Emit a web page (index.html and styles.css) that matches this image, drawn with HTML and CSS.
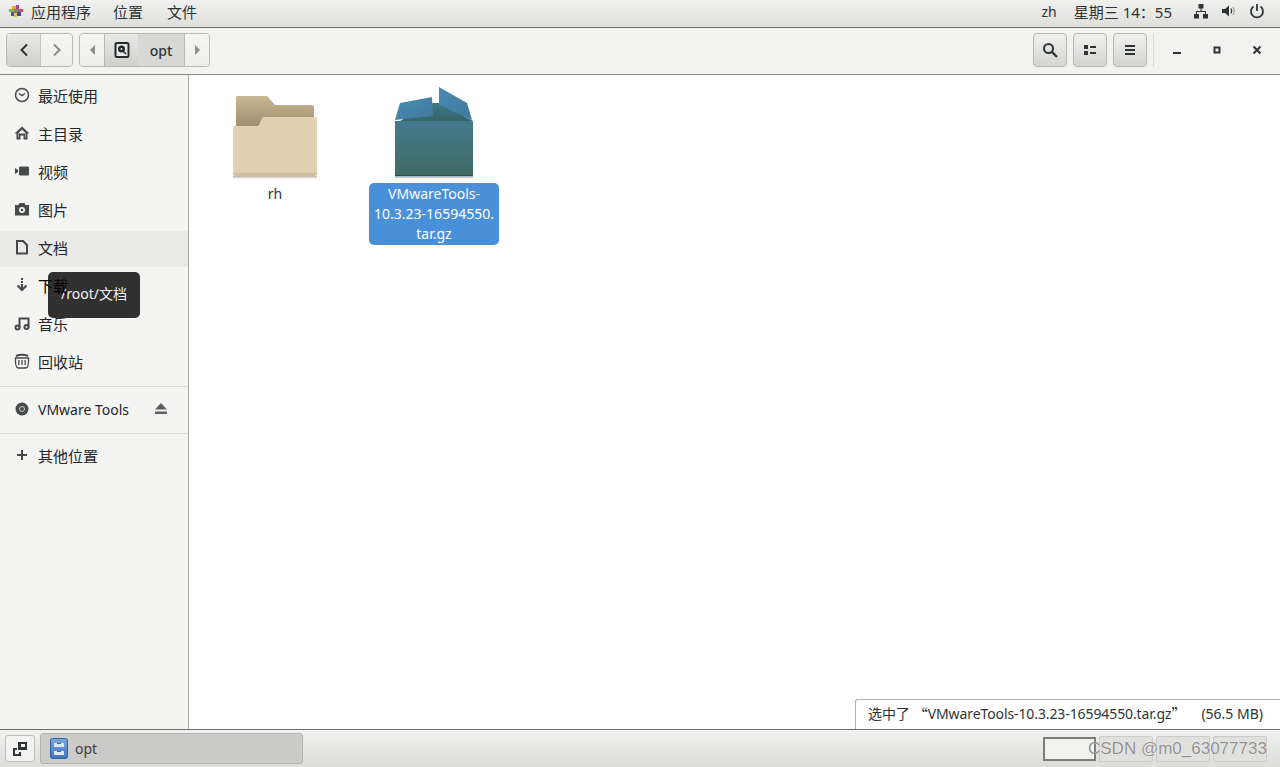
FILE: index.html
```html
<!DOCTYPE html>
<html lang="zh">
<head>
  <meta charset="UTF-8">
  <title>opt</title>
  <link rel="stylesheet" href="styles.css">
</head>
<body>
  <div class="topbar">
    <svg class="logo" width="18" height="18" viewBox="0 0 18 18">
      <rect x="5" y="4" width="4" height="3" fill="#e8a33c"/>
      <rect x="9" y="3" width="3" height="4" fill="#a04a9c"/>
      <rect x="12" y="7" width="4" height="3" fill="#c8447c"/>
      <rect x="2" y="7" width="5" height="3" fill="#7cb84a"/>
      <rect x="7" y="7" width="5" height="4" fill="#8f7f5a"/>
      <rect x="4" y="10" width="3" height="4" fill="#4a5aa8"/>
      <rect x="7" y="11" width="3" height="4" fill="#e0c850"/>
      <rect x="10" y="10" width="4" height="4" fill="#3f4c9c"/>
    </svg>
    <span class="menu-item first">应用程序</span>
    <span class="menu-item second">位置</span>
    <span class="menu-item">文件</span>
    <div class="spacer"></div>
    <span class="lang">zh</span>
    <span class="clock">星期三 14：55</span>
    <svg class="tray" width="16" height="16" viewBox="0 0 16 16" fill="#2e3436"><rect x="5.500" y="1" width="5" height="4.500"/><rect x="1" y="11" width="5" height="4.500"/><rect x="10" y="11" width="5" height="4.500"/><path d="M7.500 5h1v3h4.500v3h-1V9H4v2H3V8h4.500z"/></svg>
    <svg class="tray" width="16" height="16" viewBox="0 0 16 16"><path d="M1 6h3l4-3.500v11L4 10H1z" fill="#2e3436"/><path d="M10 5.500q1.500 2.500 0 5" stroke="#2e3436" stroke-width="1.300" fill="none"/><path d="M12 4q2.500 4 0 8" stroke="#9a9c9a" stroke-width="1.200" fill="none"/></svg>
    <svg class="tray last" width="16" height="16" viewBox="0 0 16 16" fill="none" stroke="#2e3436" stroke-width="1.800"><path d="M4.500 3.600a6 6 0 1 0 7 0"/><path d="M8 1v7"/></svg>
  </div>

  <div class="toolbar">
    <div class="btn-group">
      <div class="btn nav pressed"><svg width="10" height="14" viewBox="0 0 10 14" fill="none" stroke="#2e3436" stroke-width="2"><path d="M8 1.500 2.500 7 8 12.500"/></svg></div>
      <div class="btn nav"><svg width="10" height="14" viewBox="0 0 10 14" fill="none" stroke="#8a8d8a" stroke-width="2"><path d="M2 1.500 7.500 7 2 12.500"/></svg></div>
    </div>
    <div class="btn-group path">
      <div class="btn arrow"><svg width="7" height="10" viewBox="0 0 7 10"><path d="M6 0v10L1 5z" fill="#8a8d8a"/></svg></div>
      <div class="btn disk pressed"><svg width="16" height="16" viewBox="0 0 16 16"><rect x="1.500" y="1" width="13" height="14" rx="1.500" fill="#e8e8e6" stroke="#23282a" stroke-width="2"/><circle cx="7.500" cy="7" r="3.500" fill="#23282a"/><circle cx="7.500" cy="7" r="1" fill="#e8e8e6"/><path d="m9 9 3 3" stroke="#23282a" stroke-width="1.500"/></svg></div>
      <div class="btn crumb">opt</div>
      <div class="btn arrow"><svg width="7" height="10" viewBox="0 0 7 10"><path d="M1 0v10l5-5z" fill="#8a8d8a"/></svg></div>
    </div>
    <div class="spacer"></div>
    <div class="btn tool"><svg width="16" height="16" viewBox="0 0 16 16" fill="none" stroke="#2e3436" stroke-width="2"><circle cx="6.500" cy="6.500" r="4.500"/><path d="m10 10 5 5" stroke-width="2.400"/></svg></div>
    <div class="btn tool"><svg width="14" height="12" viewBox="0 0 14 12" fill="#2e3436"><rect x="1" y="1" width="4" height="4"/><rect x="1" y="7" width="4" height="4"/><rect x="7" y="2" width="6" height="2"/><rect x="7" y="8" width="6" height="2"/></svg></div>
    <div class="btn tool"><svg width="12" height="12" viewBox="0 0 12 12" fill="#2e3436"><rect x="1" y="1" width="10" height="2"/><rect x="1" y="5" width="10" height="2"/><rect x="1" y="9" width="10" height="2"/></svg></div>
    <div class="tool-sep"></div>
    <div class="win-btn"><svg width="10" height="10" viewBox="0 0 10 10"><rect x="1" y="7" width="8" height="2" fill="#2e3436"/></svg></div>
    <div class="win-btn"><svg width="10" height="10" viewBox="0 0 10 10"><rect x="2.500" y="2.500" width="5" height="5" fill="none" stroke="#2e3436" stroke-width="2"/></svg></div>
    <div class="win-btn"><svg width="10" height="10" viewBox="0 0 10 10" stroke="#2e3436" stroke-width="2"><path d="M1.500 1.500l7 7M8.500 1.500l-7 7"/></svg></div>
  </div>

  <div class="content">
    <div class="sidebar">
      <div class="row"><svg class="ico" width="16" height="16" viewBox="0 0 16 16" fill="none" stroke="#464a4a" stroke-width="1.500"><circle cx="8" cy="8" r="6.500"/><path d="m5 6.500 3 2 3-2"/></svg>最近使用</div>
      <div class="row"><svg class="ico" width="16" height="16" viewBox="0 0 16 16" fill="#464a4a"><path fill-rule="evenodd" d="M8 1.500 0.500 8.500h2V14.500h4v-4h3v4h4V8.500h2zM8 4.500l3.500 3.500v4.500h-.5v-4H5v4h-.5V8z"/></svg>主目录</div>
      <div class="row"><svg class="ico" width="16" height="16" viewBox="0 0 16 16" fill="#464a4a"><path d="M1 5l3 2v2l-3 2z"/><rect x="5" y="3.500" width="10" height="9" rx="1"/></svg>视频</div>
      <div class="row"><svg class="ico" width="16" height="16" viewBox="0 0 16 16"><path d="M1 4h3.500l1-2h5l1 2H15v10.500H1z" fill="#464a4a"/><circle cx="8" cy="9" r="3" fill="#f4f4f2"/><circle cx="8" cy="9" r="1.300" fill="#464a4a"/></svg>图片</div>
      <div class="row hover"><svg class="ico" width="16" height="16" viewBox="0 0 16 16" fill="none" stroke="#464a4a" stroke-width="2"><path d="M3 2h6l4 4v8.500H3z"/></svg>文档</div>
      <div class="row"><svg class="ico" width="16" height="16" viewBox="0 0 16 16"><g fill="#464a4a"><rect x="7" y="1" width="2" height="2"/><rect x="7" y="4" width="2" height="2"/><rect x="7" y="7" width="2" height="5"/></g><path d="m3.500 8.500 4.500 4.500 4.500-4.500" fill="none" stroke="#464a4a" stroke-width="2"/></svg><span class="over-tip">下载</span></div>
      <div class="row"><svg class="ico" width="16" height="16" viewBox="0 0 16 16" fill="none" stroke="#464a4a" stroke-width="2"><circle cx="3.500" cy="12.500" r="2"/><circle cx="12.500" cy="12" r="2"/><path d="M5.500 12.500V3.500h9v8.500"/></svg>音乐</div>
      <div class="row"><svg class="ico" width="16" height="16" viewBox="0 0 16 16" fill="none" stroke="#464a4a" stroke-width="1.300"><path d="M2 3q6-2.500 12 0" stroke-width="2"/><path d="M1.500 5q-.5 9 2.500 10h8q3-1 2.500-10z"/><path d="M5 7q-.5 3 0 5M8 7v5M11 7q.5 3 0 5"/></svg>回收站</div>
      <div class="side-sep"></div>
      <div class="row device"><svg class="ico" width="16" height="16" viewBox="0 0 16 16"><circle cx="8" cy="8" r="6.500" fill="#464a4a"/><circle cx="8" cy="8" r="2.500" fill="none" stroke="#c8c8c6" stroke-width="1"/></svg><span class="latin">VMware Tools</span><svg class="eject" width="14" height="12" viewBox="0 0 14 12" fill="#5d6062"><path d="M7 0l6 6.500H1z"/><rect x="1" y="8.500" width="12" height="2.500"/></svg></div>
      <div class="side-sep"></div>
      <div class="row"><svg class="ico" width="16" height="16" viewBox="0 0 16 16" fill="#464a4a"><rect x="7" y="3" width="2" height="10"/><rect x="3" y="7" width="10" height="2"/></svg>其他位置</div>
    </div>

    <div class="files">
      <div class="file">
        <div class="file-icon">
          <svg width="86" height="86" viewBox="0 0 86 86">
            <defs>
              <linearGradient id="tab" x1="0" y1="0" x2="0" y2="1"><stop offset="0" stop-color="#c9b692"/><stop offset="1" stop-color="#a08d6c"/></linearGradient>
              <linearGradient id="shade" x1="0" y1="0" x2="0" y2="1"><stop offset="0" stop-color="#b8b0a2"/><stop offset="1" stop-color="#fff"/></linearGradient>
            </defs>
            <path d="M4 3q0-2 2-2h28q1 0 2 1l7 8h36q3 0 3 2v20H4z" fill="url(#tab)"/>
            <rect x="1" y="81" width="84" height="3" fill="url(#shade)"/>
            <path d="M1 33q0-2 2-2h22q1 0 2-1l3-7q1-1 2-1h51q2 0 2 2v54q0 3-3 3H4q-3 0-3-3z" fill="#e3cfb2"/>
            <path d="M1 78q0 3 3 3h78q3 0 3-3v-.5H1z" fill="#d2bfa3"/>
          </svg>
        </div>
        <div class="file-name">rh</div>
      </div>
      <div class="file selected">
        <div class="file-icon box">
          <svg width="80" height="94" viewBox="0 0 80 94">
            <defs>
              <linearGradient id="body" x1="0" y1="0" x2="0" y2="1"><stop offset="0" stop-color="#457a8e"/><stop offset="1" stop-color="#3f6a63"/></linearGradient>
              <linearGradient id="flap" x1="0" y1="0" x2="1" y2="1"><stop offset="0" stop-color="#4a8ab5"/><stop offset="1" stop-color="#3f7a9c"/></linearGradient>
              <linearGradient id="inner" x1="0" y1="0" x2="0" y2="1"><stop offset="0" stop-color="#3e7884"/><stop offset="1" stop-color="#376468"/></linearGradient>
              <linearGradient id="floor" x1="0" y1="0" x2="0" y2="1"><stop offset="0" stop-color="#9aa5a2"/><stop offset="1" stop-color="#fff"/></linearGradient>
            </defs>
            <path d="M6 34 39 16h7l33 18z" fill="url(#inner)"/>
            <path d="M1 33 6 16l32-6 1 19z" fill="url(#flap)"/>
            <path d="M45 0 73 16l5 17-33-15z" fill="url(#flap)"/>
            <rect x="1" y="89" width="78" height="3" fill="url(#floor)"/>
            <rect x="1" y="34" width="78" height="55" fill="url(#body)"/>
            <rect x="1" y="88" width="78" height="1" fill="#2d4a44"/>
          </svg>
        </div>
        <div class="file-name">VMwareTools-<br>10.3.23-16594550.<br>tar.gz</div>
      </div>
    </div>
  </div>

  <div class="taskbar">
    <div class="show-desktop"><svg width="16" height="16" viewBox="0 0 16 16"><rect x="6" y="1" width="9" height="8" fill="#2e3436"/><rect x="9" y="3" width="4" height="3" fill="#f2f2f0"/><path d="M1 7h4v2H3v4h4v-2h2v4H1z" fill="#2e3436"/></svg></div>
    <div class="task">
      <svg width="18" height="21" viewBox="0 0 18 21">
        <defs><linearGradient id="drawer" x1="0" y1="0" x2="0" y2="1"><stop offset="0" stop-color="#7fa6dc"/><stop offset="1" stop-color="#3f74bd"/></linearGradient></defs>
        <rect x="0.500" y="0.500" width="17" height="20" rx="2" fill="url(#drawer)" stroke="#2f5f9f"/><rect x="4" y="5" width="10" height="4" fill="#dfe6ee"/><rect x="4" y="13" width="10" height="4" fill="#dfe6ee"/><rect x="7" y="5" width="4" height="1" fill="#5a6470"/><rect x="7" y="13" width="4" height="1" fill="#5a6470"/></svg>
      <span>opt</span>
    </div>
    <div class="spacer"></div>
    <div class="ws active"></div>
    <div class="ws"></div>
    <div class="ws"></div>
    <div class="ws"></div>
  </div>

  <div class="tooltip">/root/文档</div>
  <div class="status">选中了<span class="cjk-quote open">“</span>VMwareTools-10.3.23-16594550.tar.gz<span class="cjk-quote">”</span><span class="size">(56.5 MB)</span></div>
  <div class="watermark">CSDN @m0_63077733</div>
</body>
</html>
```

FILE: styles.css
```css
* {
  box-sizing: border-box;
}
html, body {
  height: 100%;
}
body {
  margin: 0;
  height: 767px;
  overflow: hidden;
  display: flex;
  flex-direction: column;
  background-color: #fff;
  color: #2e3436;
  font-family: "Noto Sans", "Noto Sans CJK SC", sans-serif;
  font-size: 14px;
}
.spacer {
  flex: 1;
}

/* top panel */
.topbar {
  height: 28px;
  display: flex;
  align-items: center;
  padding-left: 7px;
  padding-bottom: 5px;
  background: linear-gradient(#f1f1f0, #dededd);
  border-bottom: 1px solid #6f7170;
  font-size: 15px;
  flex-shrink: 0;
}
.menu-item {
  margin-left: 24px;
}
.menu-item.first {
  margin-left: 6px;
}
.menu-item.second {
  margin-left: 22px;
}
.lang {
  font-size: 14px;
}
.clock {
  margin-left: 17px;
  margin-right: 21px;
  font-size: 15px;
}
.tray {
  margin-right: 12px;
}
.tray.last {
  margin-right: 15px;
}

/* header bar */
.toolbar {
  height: 47px;
  display: flex;
  align-items: center;
  padding: 0 3px 2px 6px;
  background: #f2f2f0;
  border-bottom: 1px solid #8b8c8a;
  flex-shrink: 0;
}
.btn-group {
  display: flex;
  height: 34px;
  border: 1px solid #b8b9b6;
  border-radius: 4px;
  overflow: hidden;
}
.btn-group.path {
  margin-left: 6px;
}
.btn {
  display: flex;
  align-items: center;
  justify-content: center;
  background: linear-gradient(#f6f6f5, #ededeb);
}
.btn.nav {
  width: 33px;
}
.btn.nav + .btn.nav {
  width: 32px;
  border-left: 1px solid #c4c5c2;
}
.btn.pressed {
  background: linear-gradient(#e9e9e7, #cfcfcc);
}
.btn.arrow {
  width: 24px;
}
.btn.disk {
  width: 34px;
  border-left: 1px solid #b8b9b6;
}
.btn.crumb {
  width: 47px;
  background: #d8d8d6;
  font-weight: 500;
  border-right: 1px solid #b8b9b6;
}
.btn.tool {
  width: 34px;
  height: 34px;
  margin-right: 6px;
  border: 1px solid #b8b9b6;
  border-radius: 4px;
  background: linear-gradient(#f0f0ee, #d4d4d1);
}
.tool-sep {
  width: 1px;
  height: 34px;
  margin-right: 3px;
  background: #d8d8d6;
}
.win-btn {
  width: 40px;
  display: flex;
  justify-content: center;
  align-items: center;
}

/* main area */
.content {
  flex: 1;
  display: flex;
  min-height: 0;
}
.sidebar {
  width: 189px;
  padding-top: 4px;
  background: #f4f4f2;
  border-right: 1px solid #a9aaa8;
  flex-shrink: 0;
}
.row {
  height: 36px;
  margin-bottom: 2px;
  padding-left: 14px;
  padding-bottom: 4px;
  display: flex;
  align-items: center;
  font-size: 15px;
  color: #232729;
}
.row.hover {
  background: #eaeae8;
}
.row.device {
  padding-bottom: 2px;
}
.ico {
  margin-right: 8px;
  flex-shrink: 0;
}
.latin {
  font-size: 14px;
}
.over-tip {
  position: relative;
  z-index: 2;
  color: #000;
}
.eject {
  margin-left: 25px;
}
.side-sep {
  height: 1px;
  margin: 5px 0;
  background: #d9d9d7;
}

/* file grid */
.files {
  flex: 1;
  display: flex;
  align-items: flex-start;
  gap: 29px;
  padding: 10px 0 0 21px;
}
.file {
  width: 130px;
  display: flex;
  flex-direction: column;
  align-items: center;
}
.file-icon {
  height: 98px;
  padding-top: 10px;
}
.file-icon.box {
  padding-top: 2px;
}
.file-name {
  width: 100%;
  padding: 1px 0;
  line-height: 20px;
  text-align: center;
  color: #2e3436;
  font-size: 14px;
  border-radius: 5px;
}
.file.selected .file-name {
  background: #4a90d9;
  color: #fff;
}

/* bottom panel */
.taskbar {
  height: 38px;
  display: flex;
  align-items: center;
  padding: 0 13px 0 5px;
  background: linear-gradient(#f1f1f0, #dcdcda);
  border-top: 1px solid #6f7170;
  flex-shrink: 0;
}
.show-desktop {
  width: 30px;
  height: 27px;
  display: flex;
  align-items: center;
  justify-content: center;
  background: #f2f2f0;
  border: 1px solid #c0c1be;
  border-radius: 3px;
}
.task {
  width: 263px;
  height: 31px;
  margin-left: 5px;
  padding-left: 9px;
  display: flex;
  align-items: center;
  gap: 7px;
  background: #cbcbc9;
  border: 1px solid #b4b5b3;
  border-radius: 3px;
  color: #3c4042;
  font-size: 14px;
}
.ws {
  width: 54px;
  height: 26px;
  margin-left: 3px;
  background: #e0e0de;
  border: 1px solid #cbcbc9;
  border-radius: 2px;
}
.ws.active {
  width: 53px;
  height: 24px;
  background: #f1f1ef;
  border: 2px solid #7c7d7b;
  border-radius: 0;
}

/* things that lie over the window */
.tooltip {
  position: absolute;
  z-index: 1;
  left: 48px;
  top: 272px;
  width: 92px;
  height: 46px;
  padding-bottom: 4px;
  display: flex;
  align-items: center;
  justify-content: center;
  background: #303030;
  border-radius: 5px;
  color: #f2f2f2;
  font-size: 14px;
}
.status {
  position: absolute;
  left: 855px;
  top: 699px;
  width: 425px;
  height: 30px;
  padding-left: 12px;
  padding-bottom: 3px;
  display: flex;
  align-items: center;
  background: #fff;
  border: 1px solid #b0b1af;
  border-width: 1px 0 0 1px;
  border-top-left-radius: 3px;
  color: #2e3436;
  font-size: 14px;
  letter-spacing: -0.1px;
  white-space: pre;
}
.cjk-quote {
  width: 15px;
  font-family: "Noto Sans CJK SC", sans-serif;
  font-size: 15px;
}
.cjk-quote.open {
  width: 18px;
  text-align: right;
}
.size {
  margin-left: 15px;
  letter-spacing: 0;
}
.watermark {
  position: absolute;
  left: 1088px;
  top: 739px;
  font-family: "Liberation Sans", sans-serif;
  font-size: 17px;
  white-space: nowrap;
  color: rgba(110, 110, 110, 0.75);
  text-shadow: 0 0 1px #fff;
}
```
